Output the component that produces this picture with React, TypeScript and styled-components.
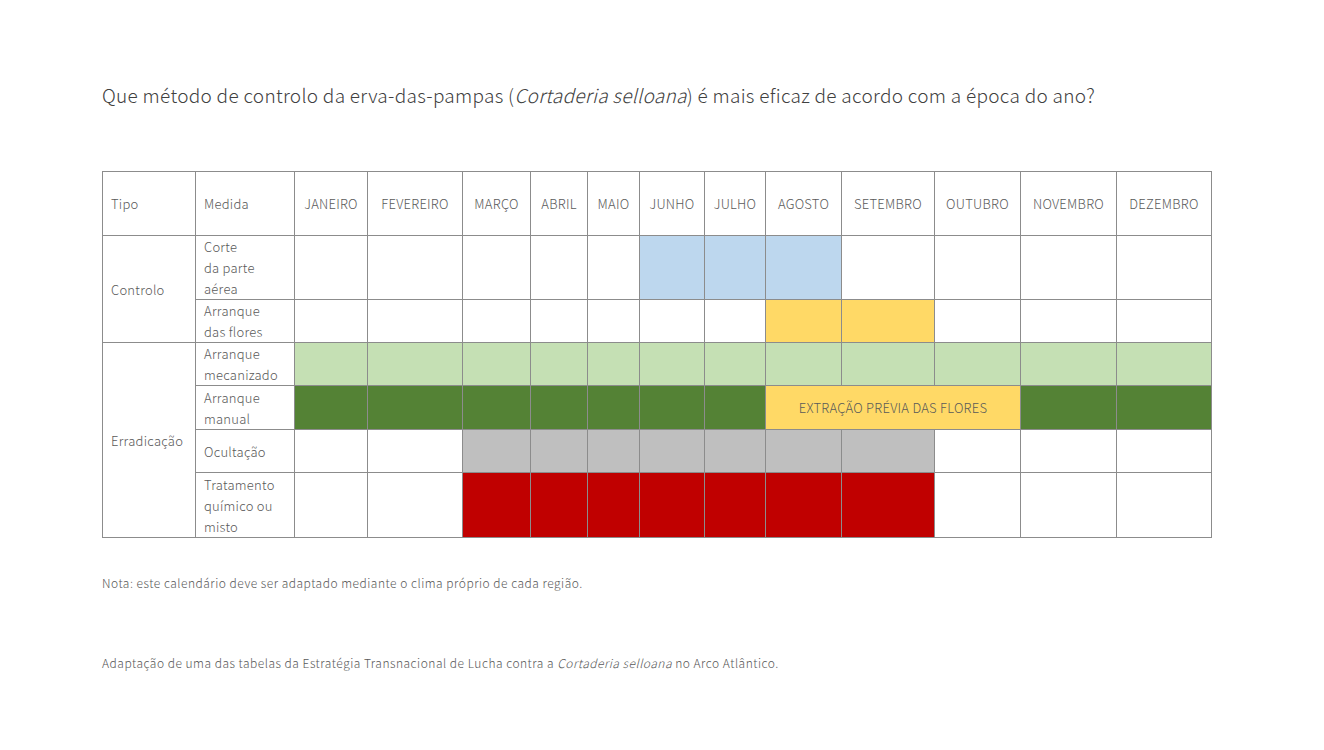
import React from 'react';
import styled, { createGlobalStyle } from 'styled-components';

const GlobalStyle = createGlobalStyle`
    html, body {
        margin: 0;
        padding: 0;
        background: #ffffff;
    }
    body {
        font-family: 'Noto Sans CJK JP', 'Noto Sans', sans-serif;
        font-weight: 300;
        color: #595959;
    }
`;

const COLORS = {
    blue: '#bdd7ee',
    yellow: '#ffd966',
    lightGreen: '#c5e0b4',
    darkGreen: '#548235',
    gray: '#bfbfbf',
    red: '#c00000',
};

type Fill = keyof typeof COLORS | undefined;

const Page = styled.div`
    width: 1324px;
    height: 750px;
    box-sizing: border-box;
    padding: 82px 0 0 102px;
    display: flex;
    flex-direction: column;
`;

const Title = styled.h1`
    margin: 0;
    font-size: 19px;
    font-weight: 300;
    line-height: 26px;
    color: #404040;
    letter-spacing: 0.3px;
`;

const Table = styled.table`
    margin-top: 63px;
    width: 1110px;
    border-collapse: collapse;
    table-layout: fixed;
    font-size: 13px;
    line-height: 21px;
    letter-spacing: 0.25px;
`;

const Cell = styled.td<{ $fill?: Fill; $center?: boolean; $h?: number }>`
    border: 1px solid #8c8c8c;
    padding: 0 8px;
    height: ${(p) => (p.$h ? `${p.$h}px` : 'auto')};
    vertical-align: middle;
    text-align: ${(p) => (p.$center ? 'center' : 'left')};
    background: ${(p) => (p.$fill ? COLORS[p.$fill] : '#ffffff')};
    color: #595959;
    white-space: nowrap;
`;

const HeadCell = styled(Cell)`
    height: 63px;
`;

const Note = styled.p<{ $top: number }>`
    margin: ${(p) => p.$top}px 0 0;
    font-size: 12px;
    line-height: 18px;
    color: #595959;
    letter-spacing: 0.5px;
`;

const MONTHS = [
    'JANEIRO',
    'FEVEREIRO',
    'MARÇO',
    'ABRIL',
    'MAIO',
    'JUNHO',
    'JULHO',
    'AGOSTO',
    'SETEMBRO',
    'OUTUBRO',
    'NOVEMBRO',
    'DEZEMBRO',
];

const WIDTHS = [93, 99, 73, 95, 68, 57, 52, 65, 61, 76, 93, 86, 96, 95];

const fills = (from: number, to: number, color: Fill): Fill[] =>
    MONTHS.map((_, i) => (i >= from && i <= to ? color : undefined));

const MonthCells = ({ row, h }: { row: Fill[]; h: number }) => (
    <>
        {row.map((f, i) => (
            <Cell key={i} $fill={f} $h={h} />
        ))}
    </>
);

export default function App() {
    return (
        <>
            <GlobalStyle />
            <Page>
                <Title>
                    Que método de controlo da erva-das-pampas (<i>Cortaderia selloana</i>) é mais eficaz de acordo com a
                    época do ano?
                </Title>
                <Table>
                    <colgroup>
                        {WIDTHS.map((w, i) => (
                            <col key={i} style={{ width: w }} />
                        ))}
                    </colgroup>
                    <tbody>
                        <tr>
                            <HeadCell>Tipo</HeadCell>
                            <HeadCell>Medida</HeadCell>
                            {MONTHS.map((m) => (
                                <HeadCell key={m} $center>
                                    {m}
                                </HeadCell>
                            ))}
                        </tr>
                        <tr>
                            <Cell rowSpan={2}>Controlo</Cell>
                            <Cell $h={63}>
                                Corte
                                <br />
                                da parte
                                <br />
                                aérea
                            </Cell>
                            <MonthCells row={fills(5, 7, 'blue')} h={63} />
                        </tr>
                        <tr>
                            <Cell $h={42}>
                                Arranque
                                <br />
                                das flores
                            </Cell>
                            <MonthCells row={fills(7, 8, 'yellow')} h={42} />
                        </tr>
                        <tr>
                            <Cell rowSpan={4}>Erradicação</Cell>
                            <Cell $h={42}>
                                Arranque
                                <br />
                                mecanizado
                            </Cell>
                            <MonthCells row={fills(0, 11, 'lightGreen')} h={42} />
                        </tr>
                        <tr>
                            <Cell $h={43}>
                                Arranque
                                <br />
                                manual
                            </Cell>
                            {MONTHS.slice(0, 7).map((m) => (
                                <Cell key={m} $fill="darkGreen" $h={43} />
                            ))}
                            <Cell colSpan={3} $fill="yellow" $center>
                                EXTRAÇÃO PRÉVIA DAS FLORES
                            </Cell>
                            <Cell $fill="darkGreen" />
                            <Cell $fill="darkGreen" />
                        </tr>
                        <tr>
                            <Cell $h={42}>Ocultação</Cell>
                            <MonthCells row={fills(2, 8, 'gray')} h={42} />
                        </tr>
                        <tr>
                            <Cell $h={64}>
                                Tratamento
                                <br />
                                químico ou
                                <br />
                                misto
                            </Cell>
                            <MonthCells row={fills(2, 8, 'red')} h={64} />
                        </tr>
                    </tbody>
                </Table>
                <Note $top={36}>Nota: este calendário deve ser adaptado mediante o clima próprio de cada região.</Note>
                <Note $top={62}>
                    Adaptação de uma das tabelas da Estratégia Transnacional de Lucha contra a <i>Cortaderia selloana</i>{' '}
                    no Arco Atlântico.
                </Note>
            </Page>
        </>
    );
}
